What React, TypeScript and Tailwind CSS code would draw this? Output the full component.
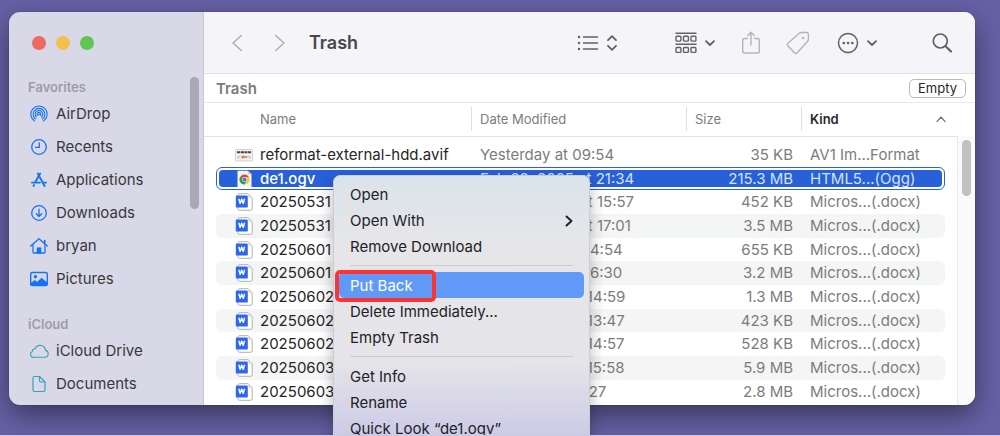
import React from 'react';

const stroke = {
  fill: 'none',
  stroke: 'currentColor',
  strokeLinecap: 'round' as const,
  strokeLinejoin: 'round' as const,
};

const AirDropIcon = () => (
  <svg viewBox="0 0 20 20" className="size-5" {...stroke} strokeWidth="1.1">
    <path d="M5.600 17.100a8.200 8.200 0 1 1 8.800 0" />
    <path d="M6.500 15a5.900 5.900 0 1 1 7 0" />
    <path d="M7.400 13a3.800 3.800 0 1 1 5.200 0" />
    <path d="M8.500 11.500a1.900 1.900 0 1 1 3 0" />
    <circle cx="10" cy="10.400" r="0.900" fill="currentColor" stroke="none" />
  </svg>
);

const ClockIcon = () => (
  <svg viewBox="0 0 20 20" className="size-5" {...stroke} strokeWidth="1.3">
    <circle cx="10" cy="10" r="7.300" />
    <path d="M10.300 5.800v4.600H6.600" />
  </svg>
);

const AppsIcon = () => (
  <svg viewBox="0 0 20 20" className="size-5" {...stroke} strokeWidth="1.9">
    <path d="M11.2 3.6 6.3 12" />
    <path d="M8.8 3.6 15.6 16" />
    <path d="M2.9 12.6h8" />
    <path d="M14.1 12.6h3" />
    <path d="M5 15.1 4.5 16" />
  </svg>
);

const DownloadIcon = () => (
  <svg viewBox="0 0 20 20" className="size-5" {...stroke} strokeWidth="1.3">
    <circle cx="10" cy="10" r="7.300" />
    <path d="M10 6.2v7M7.3 10.8l2.7 2.7 2.7-2.7" />
  </svg>
);

const HomeIcon = () => (
  <svg viewBox="0 0 20 20" className="size-5" {...stroke} strokeWidth="1.3">
    <path d="M1.7 10 10 2.7l8.300 7.300" />
    <path d="M4 8.500v7.700c0 .5.3.8.8.8h10.400c.5 0 .8-.3.8-.8V8.500" />
    <path d="M15.700 7.400V4.600" strokeWidth="1.600" />
    <path d="M8 17v-5.300h4V17z" fill="currentColor" strokeWidth="0.500" />
  </svg>
);

const PictureIcon = () => (
  <svg viewBox="0 0 20 20" className="size-5" {...stroke} strokeWidth="1.4">
    <rect x="1.700" y="3.500" width="16.600" height="13" rx="1.600" />
    <circle cx="6.400" cy="7.700" r="1.700" fill="currentColor" stroke="none" />
    <path d="M2 14.300l3.700-3 2.400 1.900 4.500-4.100 5.400 4.600v2.500H2z" fill="currentColor" strokeWidth="0.600" />
  </svg>
);

const CloudIcon = () => (
  <svg viewBox="0 0 20 20" className="size-5" {...stroke} strokeWidth="1.1">
    <path d="M4.500 16.300h11.200a3.500 3.500 0 0 0 .8-6.900 5.300 5.300 0 0 0-10.200-1.700 2.900 2.900 0 0 0-3 2.700 3.100 3.100 0 0 0 1.200 5.900z" />
  </svg>
);

const DocumentIcon = () => (
  <svg viewBox="0 0 20 20" className="size-5" {...stroke} strokeWidth="1.200">
    <path d="M5.400 2.500H10.500l5.500 5.500v8.100a1.400 1.400 0 0 1-1.400 1.400H5.400A1.400 1.400 0 0 1 4 16.100V3.900a1.400 1.400 0 0 1 1.400-1.400z" />
    <path d="M10.500 2.700v4.100c0 .7.400 1.200 1.200 1.200H16" />
  </svg>
);

const ChevronDown = () => (
  <svg viewBox="0 0 10 10" className="size-2.5" {...stroke} strokeWidth="1.800">
    <path d="M1 3.200 5 7l4-3.800" />
  </svg>
);

const WordIcon = () => (
  <svg viewBox="0 0 18 18" className="size-[18px]">
    <path d="M4.500.7h8.700l4 4v11a1.600 1.600 0 0 1-1.600 1.600H4.500a1.600 1.600 0 0 1-1.600-1.600V2.300A1.600 1.600 0 0 1 4.500.7z" fill="#fff" stroke="#a9a9ad" strokeWidth="0.900" />
    <path d="M13.200.7v2.600c0 .9.600 1.400 1.400 1.400h2.600z" fill="#d8d8da" />
    <rect x="0.800" y="2.600" width="12" height="12" rx="1.200" fill="#2f66ee" />
    <path d="M3.800 5.800l1.300 4.600 1.600-4.300 1.600 4.300 1.300-4.600" fill="none" stroke="#fff" strokeWidth="1.400" strokeLinejoin="round" />
  </svg>
);

const VideoIcon = () => (
  <svg viewBox="0 0 18 18" className="size-[18px]">
    <path d="M2.500.8h10.300L16.500 4.500v12.700h-14z" fill="#f3f3f5" />
    <path d="M12.800.8v3.700h3.700z" fill="#cfd0d6" />
    <circle cx="9.500" cy="9.500" r="5" fill="#f5c33b" />
    <path d="M9.500 9.500 5.200 7a5 5 0 0 0 4.100 7.500l2.400-4z" fill="#2f9b57" />
    <path d="M5.200 7a5 5 0 0 1 8.700 0H9.500v2.500z" fill="#dc4437" />
    <circle cx="9.500" cy="9.500" r="2.400" fill="#fff" />
    <circle cx="9.500" cy="9.500" r="1.900" fill="#4478dc" />
  </svg>
);

const ImageFileIcon = () => (
  <svg viewBox="0 0 18 18" className="size-[18px]">
    <rect x="0.500" y="3.500" width="17" height="11.500" rx="1" fill="#f4f1ee" stroke="#c9c9cb" strokeWidth="0.800" />
    <path d="M2 6.300h3.200M5.800 6.300h3.200M9.500 6.300h2.500M12.500 6.300H16" stroke="#4a4341" strokeWidth="2" />
    <path d="M2 11h3.500M12 11h4" stroke="#d8d2cd" strokeWidth="2.400" />
    <path d="M6.500 11h3" stroke="#e5704e" strokeWidth="2.400" />
    <path d="M9.500 11h2.500" stroke="#a39a95" strokeWidth="2" />
  </svg>
);

const favorites = [
  { name: 'AirDrop', Icon: AirDropIcon },
  { name: 'Recents', Icon: ClockIcon },
  { name: 'Applications', Icon: AppsIcon },
  { name: 'Downloads', Icon: DownloadIcon },
  { name: 'bryan', Icon: HomeIcon },
  { name: 'Pictures', Icon: PictureIcon },
];

const icloud = [
  { name: 'iCloud Drive', Icon: CloudIcon },
  { name: 'Documents', Icon: DocumentIcon },
];

type Place = { name: string; Icon: () => React.JSX.Element };

function SidebarSection({ title, items, tint }: { title: string; items: Place[]; tint: string }) {
  return (
    <section>
      <h2 className="pl-[19px] text-[13px] leading-5 font-semibold text-[#9d9ca9]">{title}</h2>
      <ul>
        {items.map(({ name, Icon }) => (
          <li key={name}>
            <a href="#" className="flex h-[33px] items-center gap-[7px] pl-5 text-[15px] text-[#38383c]">
              <span className={tint}>
                <Icon />
              </span>
              <span className="pt-0.5">{name}</span>
            </a>
          </li>
        ))}
      </ul>
    </section>
  );
}

const docx = 'Micros...(.docx)';
const files = [
  { name: 'reformat-external-hdd.avif', date: 'Yesterday at 09:54', size: '35 KB', kind: 'AV1 Im...Format', Icon: ImageFileIcon },
  { name: 'de1.ogv', date: 'Feb 28, 2025 at 21:34', size: '215.3 MB', kind: 'HTML5...(Ogg)', Icon: VideoIcon, selected: true },
  { name: '20250531', date: 'May 31, 2025 at 15:57', size: '452 KB', kind: docx, Icon: WordIcon },
  { name: '20250531', date: 'May 31, 2025 at 17:01', size: '3.5 MB', kind: docx, Icon: WordIcon },
  { name: '20250601', date: 'Jun 1, 2025 at 14:54', size: '655 KB', kind: docx, Icon: WordIcon },
  { name: '20250601', date: 'Jun 1, 2025 at 16:30', size: '3.2 MB', kind: docx, Icon: WordIcon },
  { name: '20250602', date: 'Jun 2, 2025 at 14:59', size: '1.3 MB', kind: docx, Icon: WordIcon },
  { name: '20250602', date: 'Jun 2, 2025 at 13:47', size: '423 KB', kind: docx, Icon: WordIcon },
  { name: '20250602', date: 'Jun 2, 2025 at 14:57', size: '528 KB', kind: docx, Icon: WordIcon },
  { name: '20250603', date: 'Jun 3, 2025 at 15:58', size: '5.9 MB', kind: docx, Icon: WordIcon },
  { name: '20250603', date: 'Yesterday at 11:27', size: '2.8 MB', kind: docx, Icon: WordIcon },
];

function RowBackground({ striped, selected }: { striped: boolean; selected?: boolean }) {
  if (selected) {
    return (
      <span className="absolute inset-x-3 inset-y-0 -z-10 rounded-md border border-[#2a62d9] bg-white p-0.5">
        <span className="block h-full rounded-sm bg-[#2860d8]" />
      </span>
    );
  }
  return striped ? <span className="absolute inset-x-3 inset-y-0 -z-10 rounded-md bg-[#f4f5f5]" /> : null;
}

function FileTable() {
  const divider = 'border-l border-[#dfdfe1] pl-2';
  return (
    <table className="w-full table-fixed border-collapse text-left text-[15px] whitespace-nowrap">
      <colgroup>
        <col className="w-[267px]" />
        <col className="w-[215px]" />
        <col className="w-[115px]" />
        <col />
      </colgroup>
      <thead className="text-[13px] text-[#7c7c7e]">
        <tr className="h-[33px] border-b border-[#e3e3e5]">
          <th className="p-0 pl-14 font-normal">Name</th>
          <th className="p-0 font-normal"><div className={`${divider} leading-6`}>Date Modified</div></th>
          <th className="p-0 font-normal"><div className={`${divider} leading-6`}>Size</div></th>
          <th className="p-0 font-semibold text-[#28282a]">
            <div className={`${divider} flex items-center justify-between pr-[11px] leading-6`}>
              Kind
              <svg viewBox="0 0 10 10" className="size-2.5 text-[#77777a]" {...stroke} strokeWidth="1.200">
                <path d="M1 7.500 5 3l4 4.500" />
              </svg>
            </div>
          </th>
        </tr>
      </thead>
      <tbody>
        <tr className="h-[7px]" aria-hidden="true">
          <td colSpan={4} className="p-0" />
        </tr>
        {files.map(({ name, date, size, kind, Icon, selected }, i) => (
          <tr
            key={i}
            className={`relative z-0 ${selected ? 'text-[#d5e1fb]' : 'text-[#7c7c7e]'} ${i % 3 === 1 ? 'h-[23px]' : 'h-6'}`}
          >
            <td className="p-0 pl-[31px] leading-5">
              <RowBackground striped={i % 2 === 1} selected={selected} />
              <div className="flex items-center gap-[7px]">
                <Icon />
                <span className={selected ? 'font-medium text-white' : 'text-[#262628]'}>{name}</span>
              </div>
            </td>
            <td className="p-0 pl-[9px] leading-5">{date}</td>
            <td className="p-0 pr-2 text-right leading-5">{size}</td>
            <td className="p-0 pl-[9px] leading-5">{kind}</td>
          </tr>
        ))}
      </tbody>
    </table>
  );
}

function Toolbar() {
  return (
    <header className="flex h-[62px] items-center border-b border-[#e1e1e5] bg-[#f5f4f9] pr-[22px] pl-[27px] text-[#626265]">
      <button aria-label="Back" className="text-[#b0b0b4]">
        <svg viewBox="0 0 12 18" className="h-[18px] w-3" {...stroke} strokeWidth="1.600">
          <path d="M10.300 1.500 2 9l8.300 7.500" />
        </svg>
      </button>
      <button aria-label="Forward" className="ml-[31px] text-[#b0b0b4]">
        <svg viewBox="0 0 12 18" className="h-[18px] w-3" {...stroke} strokeWidth="1.600">
          <path d="M1.700 1.500 10 9l-8.300 7.500" />
        </svg>
      </button>
      <h1 className="ml-[23px] flex-1 text-[18px] font-semibold text-[#48484b]">Trash</h1>
      <button aria-label="View as list" className="flex items-center gap-[7px]">
        <svg viewBox="0 0 22 18" className="h-[18px] w-[22px]" {...stroke} strokeWidth="1.500">
          <path d="M6.500 3h14M6.500 9h14M6.500 15h14" />
          <path d="M2 3h.1M2 9h.1M2 15h.1" strokeWidth="2.400" />
        </svg>
        <svg viewBox="0 0 12 18" className="h-[18px] w-3" {...stroke} strokeWidth="1.800">
          <path d="M2 6.200 6 2.200l4 4M2 11.800l4 4 4-4" />
        </svg>
      </button>
      <button aria-label="Group items" className="ml-[57px] flex items-center gap-2">
        <svg viewBox="0 0 22 22" className="size-[22px]" {...stroke} strokeWidth="1.400">
          <path d="M1 1.200h20M1 12.200h20" />
          <rect x="1" y="4.200" width="4.900" height="4.900" rx=".8" />
          <rect x="8.500" y="4.200" width="4.900" height="4.900" rx=".8" />
          <rect x="16" y="4.200" width="4.900" height="4.900" rx=".8" />
          <rect x="1" y="15.500" width="4.900" height="4.900" rx=".8" />
          <rect x="8.500" y="15.500" width="4.900" height="4.900" rx=".8" />
          <rect x="16" y="15.500" width="4.900" height="4.900" rx=".8" />
        </svg>
        <ChevronDown />
      </button>
      <button aria-label="Share" className="ml-[26px] text-[#b5b5b9]">
        <svg viewBox="0 0 20 24" className="h-6 w-5" {...stroke} strokeWidth="1.400">
          <path d="M6.500 7.500H3.600A2 2 0 0 0 1.700 9.500v10.500a2 2 0 0 0 1.900 2h12.800a2 2 0 0 0 1.900-2V9.500a2 2 0 0 0-1.900-2h-2.900" />
          <path d="M10 14V1.500M6.800 4.500 10 1.300l3.200 3.200" />
        </svg>
      </button>
      <button aria-label="Edit tags" className="ml-[25px] text-[#b5b5b9]">
        <svg viewBox="0 0 24 24" className="size-6" {...stroke} strokeWidth="1.400">
          <path d="M13.200 2.300c.6-.6 1.200-.8 2-.8h5.200a2 2 0 0 1 2 2v4.700c0 .8-.2 1.500-.8 2L11.300 21.700a2 2 0 0 1-2.800 0L2 14.900a2 2 0 0 1 0-2.700z" />
          <circle cx="17" cy="7" r="1.100" fill="currentColor" strokeWidth="0.500" />
        </svg>
      </button>
      <button aria-label="More actions" className="ml-[27px] flex items-center gap-2">
        <svg viewBox="0 0 22 22" className="size-[22px]" {...stroke} strokeWidth="1.500">
          <circle cx="11" cy="11" r="9.500" />
          <path d="M6.700 11h.1M11 11h.1M15.300 11h.1" strokeWidth="2.600" />
        </svg>
        <ChevronDown />
      </button>
      <button aria-label="Search" className="ml-[54px]">
        <svg viewBox="0 0 22 22" className="size-[22px]" {...stroke} strokeWidth="1.700">
          <circle cx="9.300" cy="9" r="7" />
          <path d="m14.600 14.300 5.400 5.200" strokeWidth="2.200" />
        </svg>
      </button>
    </header>
  );
}

const itemClass = 'flex h-[26px] w-full items-center justify-between rounded-[5px] px-[11px] pt-0.5 text-left';

function MenuItem({ children }: { children: React.ReactNode }) {
  return (
    <button role="menuitem" className={`${itemClass} text-[#222225]`}>
      {children}
    </button>
  );
}

const MenuDivider = () => <hr className="mx-[11px] my-1.5 border-[#cbcbd0]" />;

function ContextMenu() {
  return (
    <div
      role="menu"
      className="absolute top-[175px] left-[333px] w-[257px] rounded-[7px] border border-[#cccdd3] bg-[linear-gradient(#dae3ea,#e6e6e9_25%,#e5e5e9_68%,#cac7e6)] p-[5px] text-[15px] whitespace-nowrap shadow-[0_6px_16px_rgba(0,0,0,0.28)]"
    >
      <MenuItem>Open</MenuItem>
      <MenuItem>
        Open With
        <svg viewBox="0 0 8 12" className="h-3 w-2" {...stroke} strokeWidth="2">
          <path d="m1.500 1.500 5 4.500-5 4.500" />
        </svg>
      </MenuItem>
      <MenuItem>Remove Download</MenuItem>
      <MenuDivider />
      <div className="relative">
        <button role="menuitem" className={`${itemClass} bg-[#6199f8] text-white`}>Put Back</button>
        <span className="pointer-events-none absolute -top-0.5 -left-1 h-8 w-[101px] rounded-[5px] border-4 border-[#fb3333]" />
      </div>
      <MenuItem>Delete Immediately...</MenuItem>
      <MenuItem>Empty Trash</MenuItem>
      <MenuDivider />
      <MenuItem>Get Info</MenuItem>
      <MenuItem>Rename</MenuItem>
      <MenuItem>Quick Look “de1.ogv”</MenuItem>
    </div>
  );
}

export default function App() {
  return (
    <main className="relative h-screen overflow-hidden bg-[#6661a6] pt-3 pr-[25px] pl-[9px] font-['Inter',sans-serif]">
      <div className="flex overflow-hidden rounded-[11px] shadow-[0_10px_28px_rgba(0,0,0,0.45),0_0_1px_rgba(0,0,0,0.6)]">
        <aside className="relative w-[195px] shrink-0 border-r border-[#c9c8d3] bg-[#d9d8e6] pb-[5px]">
          <div className="flex gap-2.5 pt-6 pl-[23px]">
            <button aria-label="Close" className="size-3.5 rounded-full bg-[#ec6a5e]" />
            <button aria-label="Minimize" className="size-3.5 rounded-full bg-[#f4bf4f]" />
            <button aria-label="Zoom" className="size-3.5 rounded-full bg-[#61c554]" />
          </div>
          <nav className="mt-[27px] flex flex-col gap-[19px]">
            <SidebarSection title="Favorites" items={favorites} tint="text-[#1573f3]" />
            <SidebarSection title="iCloud" items={icloud} tint="text-[#36a2bf]" />
          </nav>
          <div className="absolute top-[65px] right-1 h-[132px] w-[9px] rounded-full bg-[#a9a8b3]" />
        </aside>
        <section className="flex min-w-0 flex-1 flex-col bg-white">
          <Toolbar />
          <div className="flex h-[29px] items-center justify-between border-b border-[#e8e8ea] pr-[9px] pl-3">
            <span className="pt-0.5 text-[15px] font-semibold text-[#7b7b7e]">Trash</span>
            <button className="h-[19px] rounded-[5px] border border-[#b9b9bc] bg-white px-2 text-[13px] leading-4 text-[#28282a]">
              Empty
            </button>
          </div>
          <div className="flex flex-1">
            <div className="min-w-0 flex-1">
              <FileTable />
            </div>
            <div className="flex w-[18px] shrink-0 flex-col">
              <div className="h-[33px]" />
              <div className="flex-1 border-l border-[#e9e9eb] bg-[#fafafa] px-1 pt-1">
                <div className="h-14 w-[9px] rounded-full bg-[#c1c1c3]" />
              </div>
            </div>
          </div>
        </section>
      </div>
      <ContextMenu />
      <div className="absolute inset-x-0 bottom-0 h-px bg-[#cbc9e0]" />
    </main>
  );
}
